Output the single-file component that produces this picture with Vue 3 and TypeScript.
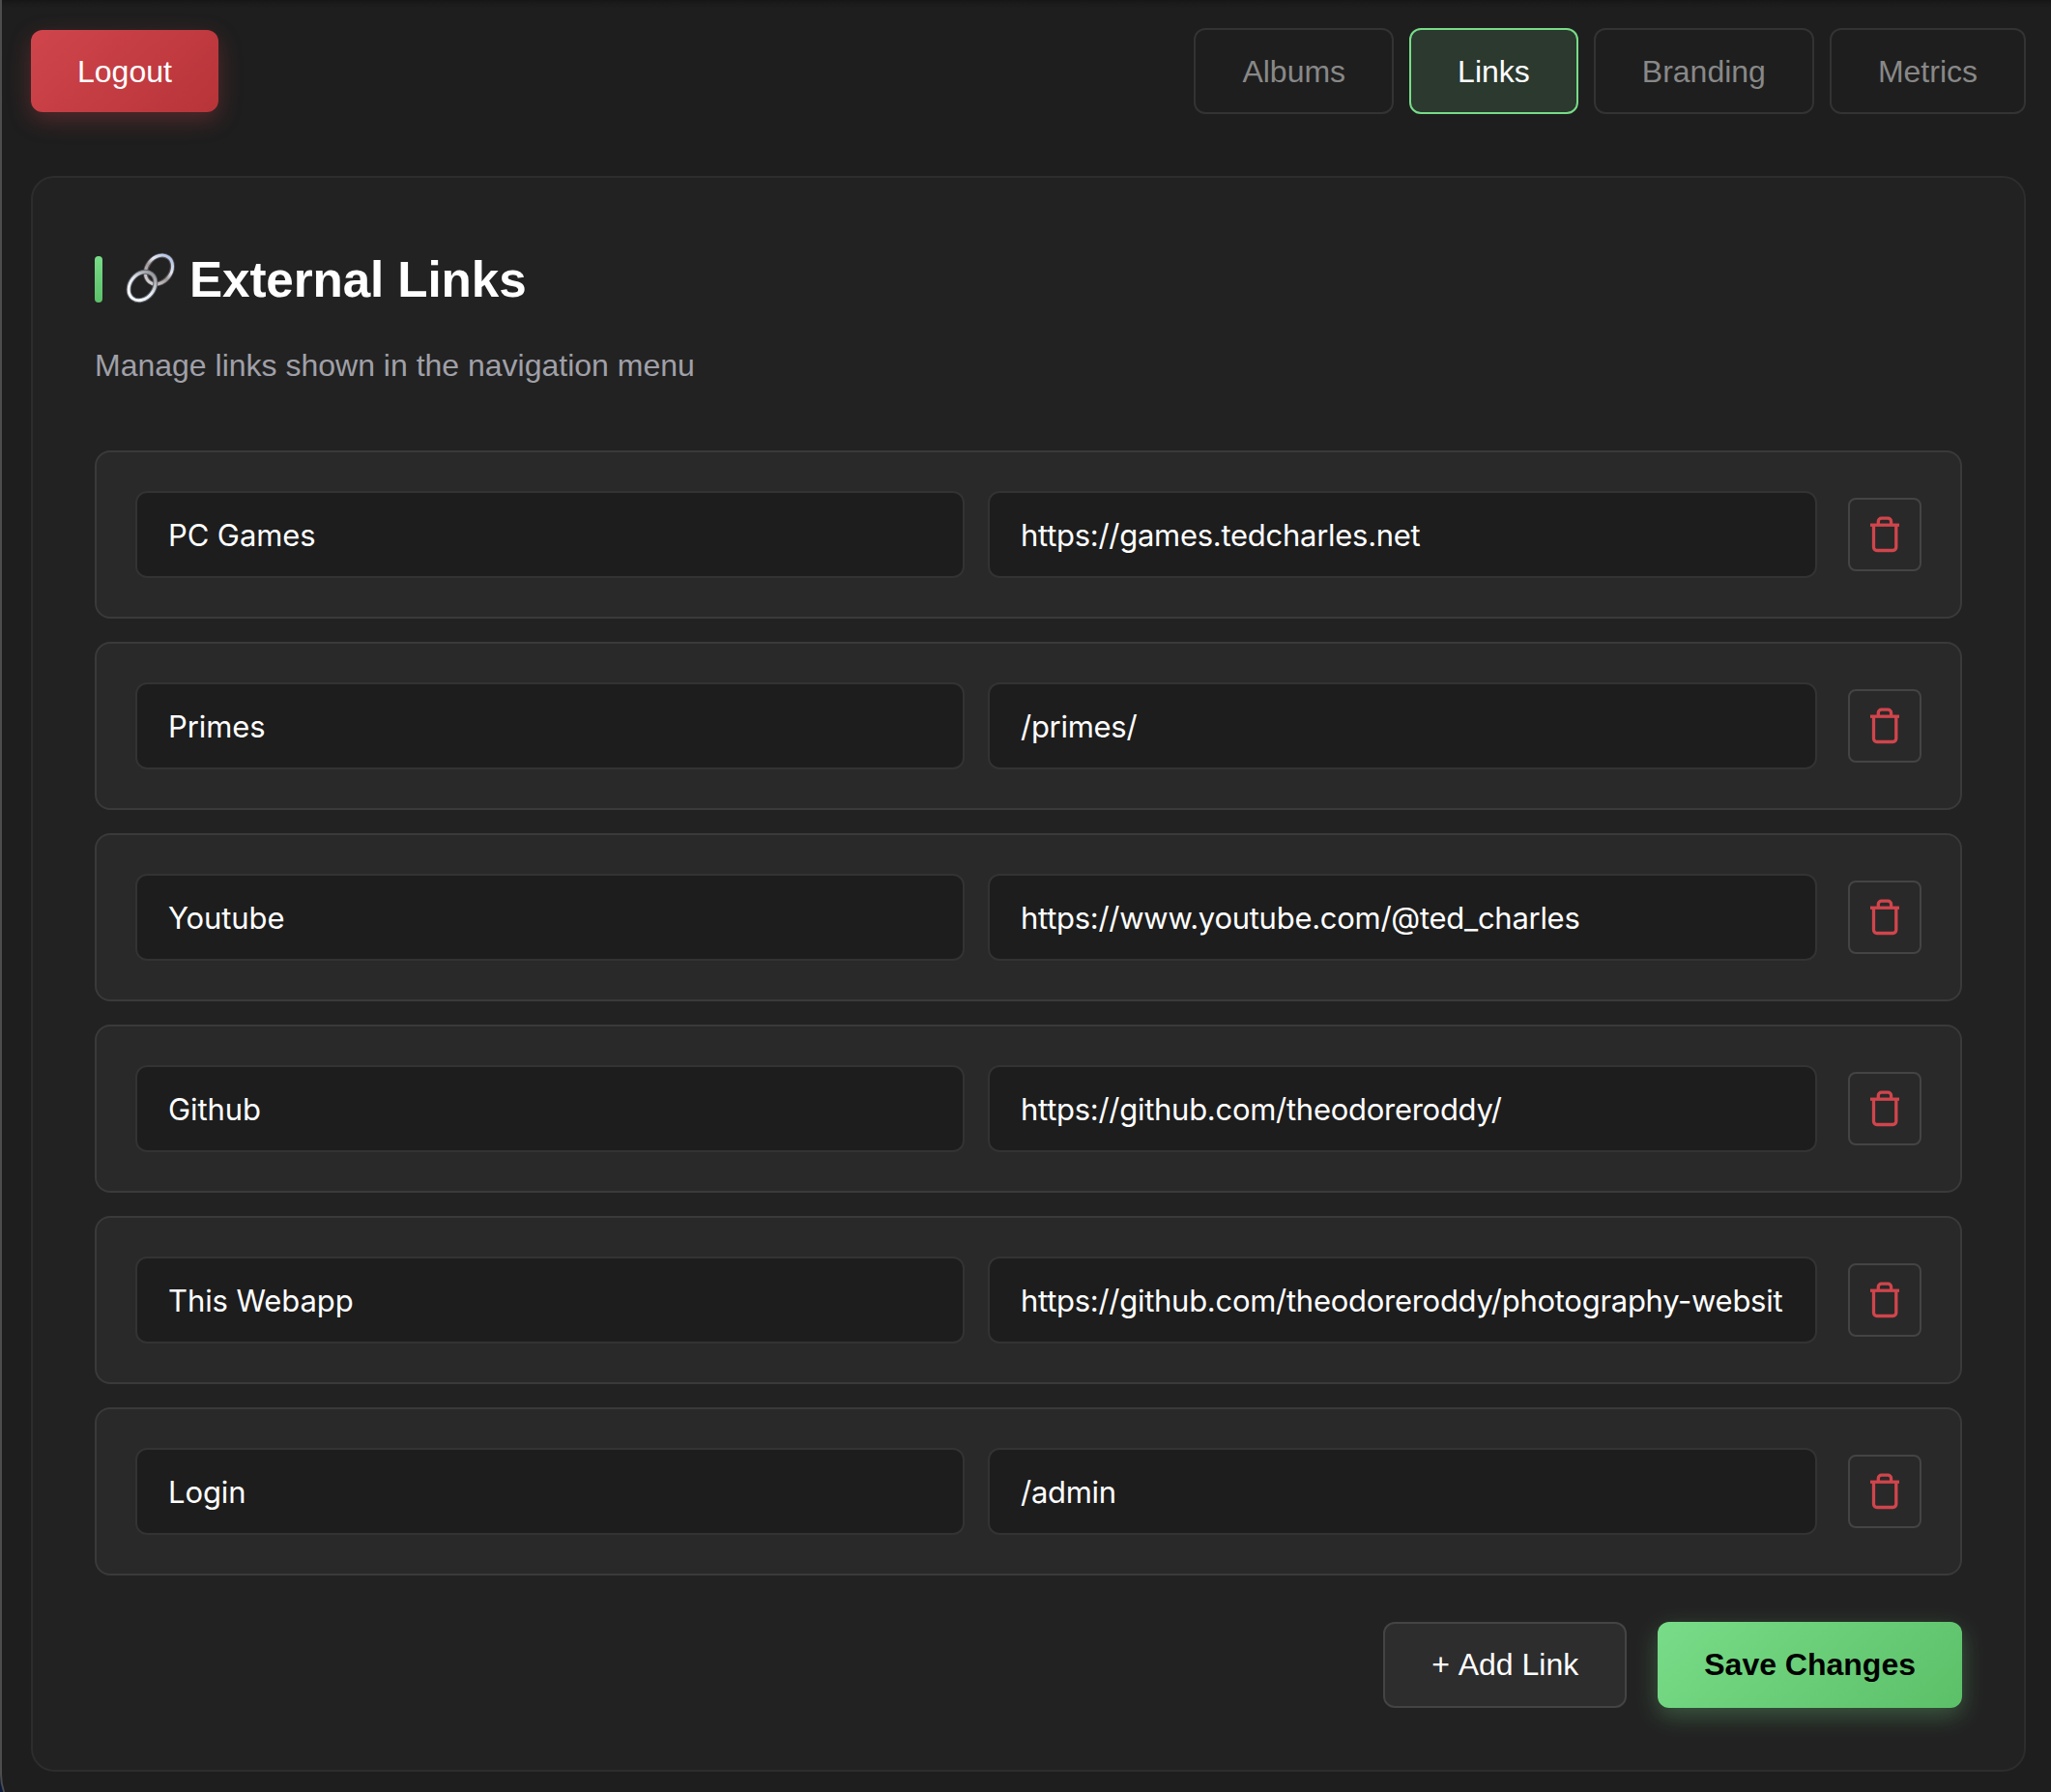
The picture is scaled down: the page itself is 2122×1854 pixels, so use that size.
<script setup lang="ts">
import { ref } from 'vue'

interface ExternalLink {
  label: string
  url: string
}

const tabs: string[] = ['Albums', 'Links', 'Branding', 'Metrics']
const activeTab = ref<string>('Links')

const links = ref<ExternalLink[]>([
  { label: 'PC Games', url: 'https://games.tedcharles.net' },
  { label: 'Primes', url: '/primes/' },
  { label: 'Youtube', url: 'https://www.youtube.com/@ted_charles' },
  { label: 'Github', url: 'https://github.com/theodoreroddy/' },
  { label: 'This Webapp', url: 'https://github.com/theodoreroddy/photography-websit' },
  { label: 'Login', url: '/admin' },
])

function addLink(): void {
  links.value.push({ label: '', url: '' })
}

function removeLink(index: number): void {
  links.value.splice(index, 1)
}
</script>

<template>
  <div class="desktop">
    <div class="window">
      <header class="toolbar">
        <button class="btn logout">Logout</button>
        <nav class="tabs">
          <button
            v-for="tab in tabs"
            :key="tab"
            class="btn tab"
            :class="{ active: tab === activeTab }"
            @click="activeTab = tab"
          >{{ tab }}</button>
        </nav>
      </header>

      <main class="card">
        <h2 class="title">
          <span class="accent"></span>
          <svg class="chain" width="52" height="52" viewBox="0 0 52 52" fill="none" aria-hidden="true">
            <defs>
              <linearGradient id="steelTop" gradientUnits="userSpaceOnUse" x1="51" y1="16" x2="19" y2="16">
                <stop offset="0" stop-color="#b3c6e8" />
                <stop offset="0.35" stop-color="#e4e9f2" />
                <stop offset="0.6" stop-color="#a29a9c" />
                <stop offset="1" stop-color="#cfccd0" />
              </linearGradient>
              <linearGradient id="steelLow" gradientUnits="userSpaceOnUse" x1="33" y1="33" x2="1" y2="33">
                <stop offset="0" stop-color="#9a9ca2" />
                <stop offset="0.5" stop-color="#e6ecf5" />
                <stop offset="1" stop-color="#f6f9fd" />
              </linearGradient>
            </defs>
            <g transform="rotate(-52 34.5 16)">
              <ellipse cx="34.5" cy="16" rx="16" ry="12.4" stroke="#5a5356" stroke-width="5" />
              <ellipse cx="34.5" cy="16" rx="16.2" ry="12.6" stroke="url(#steelTop)" stroke-width="2.9" />
            </g>
            <g transform="rotate(-52 17 33)">
              <ellipse cx="17" cy="33" rx="16" ry="12.4" stroke="#606267" stroke-width="5" />
              <ellipse cx="17" cy="33" rx="16" ry="12.4" stroke="url(#steelLow)" stroke-width="3" />
            </g>
          </svg>
          <span class="title-text">External Links</span>
        </h2>
        <p class="subtitle">Manage links shown in the navigation menu</p>

        <div class="rows">
          <div v-for="(link, i) in links" :key="i" class="row">
            <input v-model="link.label" class="field" type="text" />
            <input v-model="link.url" class="field url" type="text" />
            <button class="remove" aria-label="Delete" @click="removeLink(i)">
              <svg width="40" height="40" viewBox="0 0 40 40" fill="none" stroke="#d0454c" stroke-width="3.3">
                <path d="M5 10.2H35" />
                <path d="M8.5 10.2V33.1a3.4 3.4 0 0 0 3.4 3.4H28.4a3.4 3.4 0 0 0 3.4-3.4V10.2" />
                <path d="M13.3 10.2V6.5a3.3 3.3 0 0 1 3.3-3.3H23.3a3.3 3.3 0 0 1 3.3 3.3V10.2" />
              </svg>
            </button>
          </div>
        </div>

        <div class="actions">
          <button class="btn add" @click="addLink">+ Add Link</button>
          <button class="btn save">Save Changes</button>
        </div>
      </main>
    </div>
  </div>
</template>

<style>
body {
  margin: 0;
  background: #1e1e1e;
}
</style>

<style scoped>
* {
  box-sizing: border-box;
}

.desktop {
  height: 1854px;
  overflow: hidden;
  background: #0b1a3a;
  font-family: "Liberation Sans", Arial, sans-serif;
}

.window {
  height: 1888px;
  padding: 29px 26px 0 30px;
  border-left: 2px solid #4d4d4d;
  border-bottom-left-radius: 52px;
  background: linear-gradient(#161616, #1a1a1a 3px, #1e1e1e 8px);
}

.btn {
  padding: 24px 48px;
  border: 0;
  border-radius: 12px;
  font: 400 32px/37px "Liberation Sans", Arial, sans-serif;
  white-space: nowrap;
}

.toolbar {
  display: flex;
  align-items: center;
  justify-content: space-between;
  height: 89px;
  margin-bottom: 64px;
}

.toolbar .btn {
  padding-top: 25px;
  padding-bottom: 23px;
}

.logout {
  color: #fff;
  background: linear-gradient(135deg, #d0454c, #b73439);
  box-shadow: 0 8px 24px rgba(208, 69, 76, 0.3);
}

.tabs {
  display: flex;
  gap: 16px;
}

.tab {
  border: 2px solid #333;
  color: #888;
  background: transparent;
}

.tab.active {
  border-color: #78dc88;
  color: #fff;
  background: #2b392f;
}

.card {
  height: 1651px;
  padding: 64px;
  border: 2px solid #2d2d2d;
  border-radius: 24px;
  background: #222;
}

.title {
  display: flex;
  align-items: center;
  height: 82px;
  margin: 0;
  color: #fff;
  font-size: 51.2px;
  font-weight: 700;
  line-height: 82px;
}

.title-text {
  padding-top: 2px;
  letter-spacing: -0.1px;
}

.accent {
  width: 8px;
  height: 48px;
  margin-right: 24px;
  border-radius: 4px;
  background: linear-gradient(#78dc88, #5cc069);
}

.chain {
  margin-right: 14px;
  overflow: visible;
}

.subtitle {
  margin: 23px 0 62px;
  color: #a0a0a8;
  font-size: 32px;
  line-height: 51px;
}

.rows {
  display: flex;
  flex-direction: column;
  gap: 24px;
}

.row {
  display: flex;
  align-items: center;
  gap: 24px;
  height: 174px;
  padding: 0 40px;
  border: 2px solid #3a3a3a;
  border-radius: 16px;
  background: #292929;
}

.field {
  flex: 1;
  min-width: 0;
  height: 90px;
  padding: 0 32px;
  border: 2px solid #333;
  border-radius: 12px;
  outline: 0;
  color: #fff;
  background: #1d1d1d;
  font: 400 31px "Inter", sans-serif;
  letter-spacing: -0.1px;
}

.field.url {
  letter-spacing: -0.28px;
}

.remove {
  display: grid;
  place-items: center;
  width: 76px;
  height: 76px;
  margin-left: 8px;
  padding: 0;
  border: 2px solid #444;
  border-radius: 8px;
  background: transparent;
}

.actions {
  display: flex;
  justify-content: flex-end;
  gap: 32px;
  margin-top: 48px;
}

.add {
  border: 2px solid #444;
  color: #fff;
  background: #2d2d2d;
  font-kerning: none;
}

.save {
  color: #000;
  background: linear-gradient(135deg, #78dc88, #5cc069);
  box-shadow: 0 8px 24px rgba(120, 220, 136, 0.3);
  font-weight: 700;
}
</style>
